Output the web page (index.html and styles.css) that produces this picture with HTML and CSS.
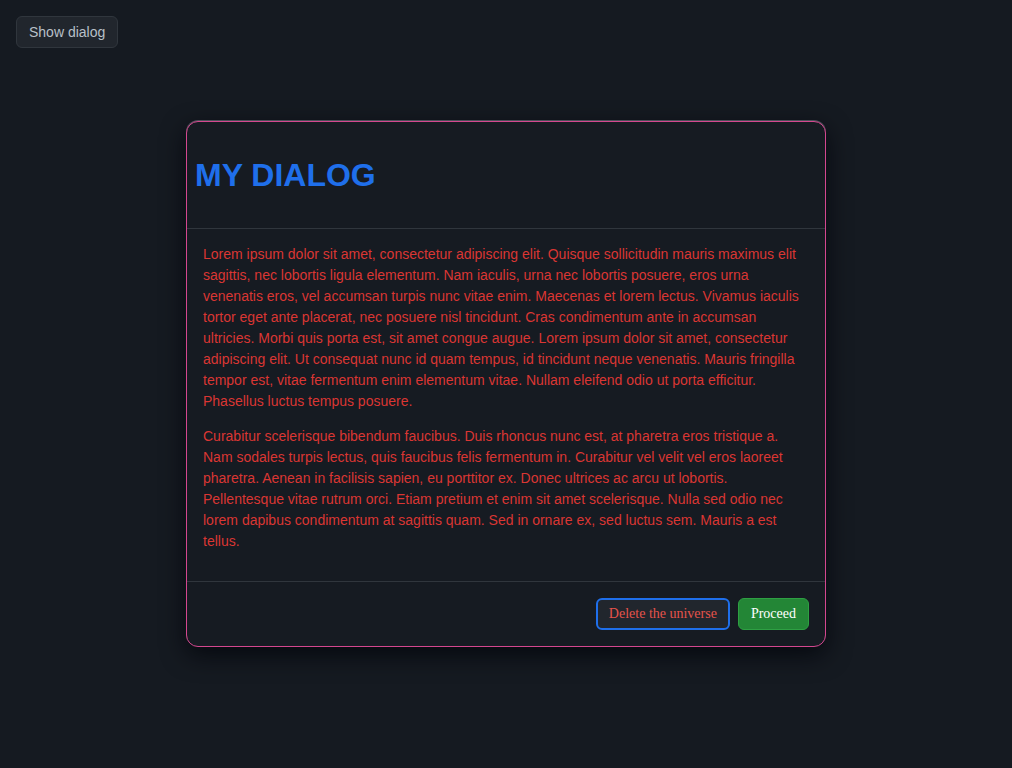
FILE: index.html
```html
<!DOCTYPE html>
<html>
<head>
<meta charset="utf-8">
<link rel="stylesheet" href="styles.css">
</head>
<body>
<button class="show-btn">Show dialog</button>
<div class="stage">
  <div class="dialog">
    <header class="dialog-header">
      <h1 class="dialog-title">MY DIALOG</h1>
    </header>
    <div class="dialog-body">
      <p>Lorem ipsum dolor sit amet, consectetur adipiscing elit. Quisque sollicitudin mauris maximus elit sagittis, nec lobortis ligula elementum. Nam iaculis, urna nec lobortis posuere, eros urna venenatis eros, vel accumsan turpis nunc vitae enim. Maecenas et lorem lectus. Vivamus iaculis tortor eget ante placerat, nec posuere nisl tincidunt. Cras condimentum ante in accumsan ultricies. Morbi quis porta est, sit amet congue augue. Lorem ipsum dolor sit amet, consectetur adipiscing elit. Ut consequat nunc id quam tempus, id tincidunt neque venenatis. Mauris fringilla tempor est, vitae fermentum enim elementum vitae. Nullam eleifend odio ut porta efficitur. Phasellus luctus tempus posuere.</p>
      <p>Curabitur scelerisque bibendum faucibus. Duis rhoncus nunc est, at pharetra eros tristique a. Nam sodales turpis lectus, quis faucibus felis fermentum in. Curabitur vel velit vel eros laoreet pharetra. Aenean in facilisis sapien, eu porttitor ex. Donec ultrices ac arcu ut lobortis. Pellentesque vitae rutrum orci. Etiam pretium et enim sit amet scelerisque. Nulla sed odio nec lorem dapibus condimentum at sagittis quam. Sed in ornare ex, sed luctus sem. Mauris a est tellus.</p>
    </div>
    <footer class="dialog-footer">
      <button class="btn btn-danger">Delete the universe</button>
      <button class="btn btn-primary">Proceed</button>
    </footer>
  </div>
</div>
</body>
</html>
```

FILE: styles.css
```css
html, body {
  margin: 0;
  padding: 0;
  background: #151a21;
  height: 100%;
}
body {
  padding: 16px;
  box-sizing: border-box;
  font-family: "Liberation Sans", Arial, sans-serif;
}
.show-btn {
  display: block;
  height: 32px;
  padding: 0 12px;
  background: #21262d;
  border: 1px solid #30363d;
  border-radius: 6px;
  color: #b8c0c8;
  font-family: "Liberation Sans", Arial, sans-serif;
  font-size: 14px;
}
.stage {
  display: flex;
  justify-content: center;
  padding-top: 73px;
}
.dialog {
  width: 640px;
  box-sizing: border-box;
  background: #161b22;
  border: 1px solid #d4478f;
  border-radius: 12px;
  box-shadow: 0 -1px 0 0 #4a4f57, 0 8px 24px rgba(1, 4, 9, 0.75);
  overflow: hidden;
}
.dialog-header {
  padding: 8px;
  border-bottom: 1px solid #30363d;
}
.dialog-title {
  margin: 27px 0 26px;
  font-size: 32px;
  font-weight: bold;
  color: #1f6feb;
  line-height: 37px;
}
.dialog-body {
  padding: 15px 16px 15px;
  color: #da3633;
  font-size: 14px;
  line-height: 21px;
  border-bottom: 1px solid #30363d;
}
.dialog-body p {
  margin: 0 0 14px;
}
.dialog-footer {
  display: flex;
  justify-content: flex-end;
  gap: 8px;
  padding: 16px;
}
.btn {
  height: 32px;
  padding: 0 12px;
  border-radius: 6px;
  font-family: "Liberation Serif", "Times New Roman", serif;
  font-size: 14px;
  box-sizing: border-box;
}
.btn-danger {
  padding: 0 11px;
  background: #21262d;
  border: 2px solid #1f6feb;
  color: #e5534b;
}
.btn-primary {
  background: #238636;
  border: 1px solid #2ea043;
  color: #ffffff;
}
```
